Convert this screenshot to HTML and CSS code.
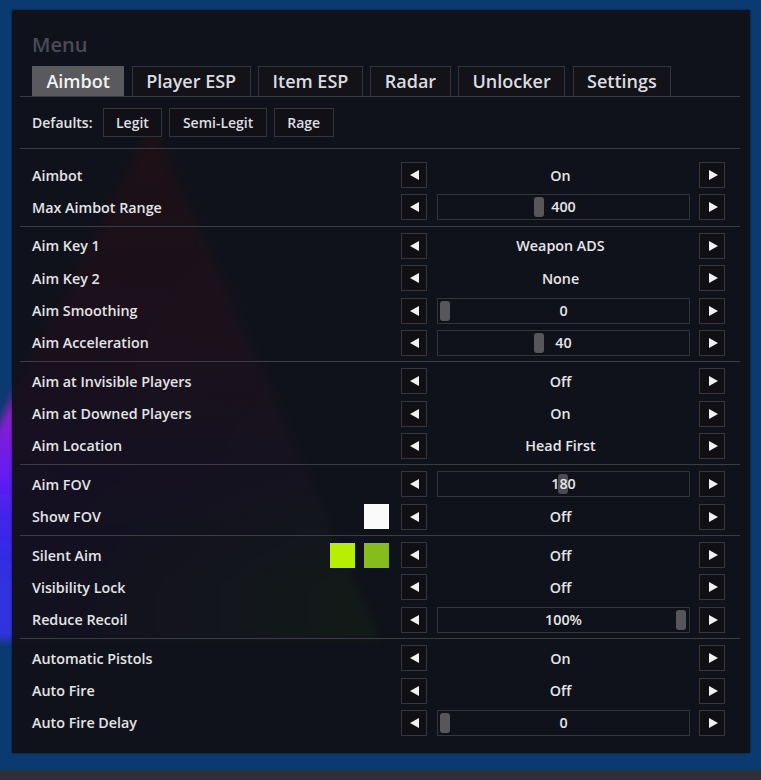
FILE: index.html
```html
<!DOCTYPE html>
<html lang="en">
<head>
<meta charset="utf-8">
<title>Menu</title>
<link rel="stylesheet" href="styles.css">
</head>
<body>
<svg class="picker" width="761" height="780" viewBox="0 0 761 780" aria-hidden="true">
  <defs>
    <linearGradient id="hue" x1="-110" y1="0" x2="380" y2="0" gradientUnits="userSpaceOnUse">
      <stop offset="0" stop-color="#1a34ff"/>
      <stop offset="0.4" stop-color="#4030c8"/>
      <stop offset="1" stop-color="#30e030"/>
    </linearGradient>
    <linearGradient id="red" x1="0" y1="122" x2="0" y2="640" gradientUnits="userSpaceOnUse">
      <stop offset="0" stop-color="#ff1a1a" stop-opacity="1"/>
      <stop offset="0.45" stop-color="#e01a80" stop-opacity="0.8"/>
      <stop offset="0.68" stop-color="#8010ff" stop-opacity="0.65"/>
      <stop offset="0.9" stop-color="#3010ff" stop-opacity="0"/>
    </linearGradient>
    <filter id="soft" x="-20%" y="-20%" width="140%" height="140%">
      <feGaussianBlur stdDeviation="4"/>
    </filter>
  </defs>
  <g filter="url(#soft)">
    <polygon points="152,122 -110,640 380,640" fill="url(#hue)"/>
    <polygon points="152,122 -110,640 380,640" fill="url(#red)"/>
  </g>
</svg>

<div class="frame">
  <div class="panel">
    <div class="title">Menu</div>

    <nav class="tabs">
      <span class="tab active">Aimbot</span>
      <span class="tab">Player ESP</span>
      <span class="tab">Item ESP</span>
      <span class="tab">Radar</span>
      <span class="tab">Unlocker</span>
      <span class="tab">Settings</span>
    </nav>

    <div class="defaults">
      <span class="defaults-label">Defaults:</span>
      <span class="btn">Legit</span>
      <span class="btn">Semi-Legit</span>
      <span class="btn">Rage</span>
    </div>

    <section class="group first">
      <div class="row"><span class="label">Aimbot</span><span class="sw"></span><span class="arrow left"></span><span class="value">On</span><span class="arrow right"></span></div>
      <div class="row"><span class="label">Max Aimbot Range</span><span class="sw"></span><span class="arrow left"></span><span class="value slider" style="--p:0.4"><i class="thumb"></i><b>400</b></span><span class="arrow right"></span></div>
    </section>

    <section class="group">
      <div class="row"><span class="label">Aim Key 1</span><span class="sw"></span><span class="arrow left"></span><span class="value">Weapon ADS</span><span class="arrow right"></span></div>
      <div class="row"><span class="label">Aim Key 2</span><span class="sw"></span><span class="arrow left"></span><span class="value">None</span><span class="arrow right"></span></div>
      <div class="row"><span class="label">Aim Smoothing</span><span class="sw"></span><span class="arrow left"></span><span class="value slider" style="--p:0"><i class="thumb"></i><b>0</b></span><span class="arrow right"></span></div>
      <div class="row"><span class="label">Aim Acceleration</span><span class="sw"></span><span class="arrow left"></span><span class="value slider" style="--p:0.4"><i class="thumb"></i><b>40</b></span><span class="arrow right"></span></div>
    </section>

    <section class="group">
      <div class="row"><span class="label">Aim at Invisible Players</span><span class="sw"></span><span class="arrow left"></span><span class="value">Off</span><span class="arrow right"></span></div>
      <div class="row"><span class="label">Aim at Downed Players</span><span class="sw"></span><span class="arrow left"></span><span class="value">On</span><span class="arrow right"></span></div>
      <div class="row"><span class="label">Aim Location</span><span class="sw"></span><span class="arrow left"></span><span class="value">Head First</span><span class="arrow right"></span></div>
    </section>

    <section class="group">
      <div class="row"><span class="label">Aim FOV</span><span class="sw"></span><span class="arrow left"></span><span class="value slider" style="--p:0.5"><i class="thumb faded"></i><b>180</b></span><span class="arrow right"></span></div>
      <div class="row"><span class="label">Show FOV</span><span class="sw"><i class="swatch white"></i></span><span class="arrow left"></span><span class="value">Off</span><span class="arrow right"></span></div>
    </section>

    <section class="group">
      <div class="row"><span class="label">Silent Aim</span><span class="sw"><i class="swatch lime"></i><i class="swatch olive"></i></span><span class="arrow left"></span><span class="value">Off</span><span class="arrow right"></span></div>
      <div class="row"><span class="label">Visibility Lock</span><span class="sw"></span><span class="arrow left"></span><span class="value">Off</span><span class="arrow right"></span></div>
      <div class="row"><span class="label">Reduce Recoil</span><span class="sw"></span><span class="arrow left"></span><span class="value slider" style="--p:1"><i class="thumb"></i><b>100%</b></span><span class="arrow right"></span></div>
    </section>

    <section class="group">
      <div class="row"><span class="label">Automatic Pistols</span><span class="sw"></span><span class="arrow left"></span><span class="value">On</span><span class="arrow right"></span></div>
      <div class="row"><span class="label">Auto Fire</span><span class="sw"></span><span class="arrow left"></span><span class="value">Off</span><span class="arrow right"></span></div>
      <div class="row"><span class="label">Auto Fire Delay</span><span class="sw"></span><span class="arrow left"></span><span class="value slider" style="--p:0"><i class="thumb"></i><b>0</b></span><span class="arrow right"></span></div>
    </section>
  </div>
</div>
<div class="taskbar"></div>
</body>
</html>
```

FILE: styles.css
```css
* { box-sizing: border-box; }

html, body {
  margin: 0;
  width: 761px;
  height: 780px;
  overflow: hidden;
}

body {
  position: relative;
  background: #0b3a70;
  font-family: "Open Sans", "Noto Sans", "DejaVu Sans", sans-serif;
  color: #e2e2e4;
}

/* colour-picker triangle sitting behind the translucent menu */
.picker {
  position: absolute;
  left: 0;
  top: 0;
  z-index: 0;
}

.frame {
  position: relative;
  z-index: 1;
  height: 770px;
  padding: 10px 11px 17px 12px;
}

.taskbar {
  height: 10px;
  background: #2e3036;
}

.panel {
  height: 743px;
  background: rgba(17, 16, 22, 0.95);
  padding: 0 10px 0 8px;
  box-shadow: 0 0 2px rgba(0, 0, 0, 0.6);
}

.title {
  padding: 21px 0 0 12px;
  height: 56px;
  font-size: 20px;
  font-weight: 600;
  color: #4b4b56;
  line-height: 28px;
}

/* tab strip */
.tabs {
  display: flex;
  gap: 7.6px;
  padding-left: 12px;
  border-bottom: 1px solid #3c3c44;
}

.tab {
  height: 30px;
  line-height: 28px;
  padding: 0 13.4px;
  border: 1px solid #34343c;
  border-bottom: none;
  font-size: 18px;
  font-weight: 600;
  color: #dcdce0;
  background: #121218;
}

.tab.active {
  background: #5a5a5e;
  color: #f2f2f2;
  border-color: #5a5a5e;
}

/* defaults row */
.defaults {
  display: flex;
  align-items: center;
  gap: 7px;
  padding: 11px 0 11px 12px;
  border-bottom: 1px solid #3c3c44;
}

.defaults-label {
  font-size: 14px;
  font-weight: 600;
  margin-right: 3px;
}

.btn {
  height: 29px;
  line-height: 27px;
  padding: 0 12.5px;
  border: 1px solid #34343c;
  background: #101016;
  font-size: 14px;
  font-weight: 600;
  color: #dedee2;
}

/* option groups */
.group {
  padding: 3px 0 2.2px;
  border-bottom: 1px solid #3c3c44;
}

.group.first {
  padding-top: 10px;
}

.group:last-child {
  border-bottom: none;
}

.row {
  display: grid;
  grid-template-columns: 1fr auto 26px 272px 26px;
  align-items: center;
  height: 32.3px;
  padding: 0 15px 0 12px;
}

.label {
  font-size: 14.3px;
  font-weight: 600;
  color: #e4e4e6;
}

.sw {
  display: flex;
  gap: 9px;
  margin-right: 12px;
}

.swatch {
  width: 25px;
  height: 25px;
  display: block;
}

.swatch.white { background: #fafafa; }
.swatch.lime { background: #b6f000; }
.swatch.olive { background: #86bd1c; }

.arrow {
  width: 26px;
  height: 26px;
  border: 1px solid #36363e;
  background: #0f0f14;
  position: relative;
}

.arrow::after {
  content: "";
  position: absolute;
  top: 7px;
  width: 0;
  height: 0;
  border-top: 5.5px solid transparent;
  border-bottom: 5.5px solid transparent;
}

.arrow.left::after {
  left: 8px;
  border-right: 9px solid #f0f0f0;
}

.arrow.right::after {
  left: 9px;
  border-left: 9px solid #f0f0f0;
}

.value {
  margin: 0 9px 0 10px;
  padding-right: 6px;
  text-align: center;
  font-size: 14.3px;
  font-weight: 600;
  color: #e6e6e8;
}

.value.slider {
  position: relative;
  height: 26px;
  line-height: 24px;
  padding-right: 0;
  border: 1px solid #34343c;
}

.value.slider b {
  position: relative;
  font-weight: 600;
}

.thumb {
  position: absolute;
  top: 2px;
  left: calc(2px + var(--p) * (100% - 15px));
  width: 10px;
  height: 20px;
  border-radius: 3px;
  background: #56565c;
}

.thumb.faded {
  background: #4a4a50;
}
```
